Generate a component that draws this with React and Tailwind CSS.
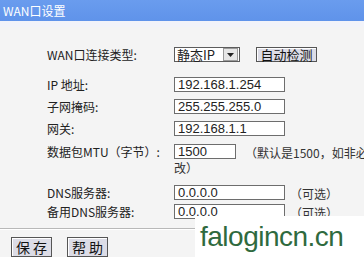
import React from 'react';

const cjk = { fontFamily: '"Noto Sans CJK SC", "Liberation Sans", sans-serif' };
const latin = { fontFamily: '"Liberation Sans", Arial, sans-serif' };

function Field({ value, width = 'w-[111px]' }) {
  return (
    <div
      className={`${width} shrink-0 h-[15px] border border-[#6d6d6d] bg-white flex items-center pl-[3px] text-[13px] leading-none text-[#222]`}
      style={latin}
    >
      {value}
    </div>
  );
}

function Row({ label, children, className = '' }) {
  return (
    <div className={`flex items-center h-[15px] ${className}`}>
      <div className="w-[127px] shrink-0 text-[12px] leading-none text-[#222] whitespace-nowrap" style={cjk}>
        {label}
      </div>
      {children}
    </div>
  );
}

function Note({ children }) {
  return (
    <span className="text-[12px] leading-none text-[#333] whitespace-nowrap" style={cjk}>
      {children}
    </span>
  );
}

const btn =
  'w-[41px] h-[20px] border border-[#555] bg-[#dcdce6] flex items-center justify-center text-[14px] leading-none tracking-[3px] pl-[3px] text-[#111] shadow-[inset_1px_1px_0_#fff]';

export default function App() {
  return (
    <div className="relative w-[364px] h-[257px] overflow-hidden bg-[#f4f4f4]">
      {/* title bar */}
      <div className="h-[21px] bg-gradient-to-b from-[#6a9cee] to-[#5f93ea] flex items-center pl-[3px]">
        <span className="text-white text-[12px] leading-none" style={cjk}>WAN口设置</span>
      </div>
      <div className="h-[6px] bg-[#f2f3f9]" />

      <div className="pl-[47px] pt-[20px]">
        <Row label="WAN口连接类型:">
          <div className="w-[66px] shrink-0 h-[15px] border border-[#5c5c5c] bg-white flex items-center">
            <span className="flex-1 pl-[2px] text-[13px] leading-none text-[#222]" style={cjk}>静态IP</span>
            <div className="w-[15px] h-[13px] mr-[1px] border border-[#9a9a9a] bg-[#e6e6e6] flex items-center justify-center">
              <svg width="7" height="4" viewBox="0 0 7 4"><path d="M0 0h7L3.5 4z" fill="#222" /></svg>
            </div>
          </div>
          <div
            className="ml-[16px] shrink-0 w-[61px] h-[15px] border border-[#555] bg-[#dcdce6] flex items-center justify-center text-[13px] leading-none text-[#111] shadow-[inset_1px_1px_0_#fff]"
            style={cjk}
          >
            自动检测
          </div>
        </Row>

        <Row label="IP 地址:" className="mt-[15px]">
          <Field value="192.168.1.254" />
        </Row>
        <Row label="子网掩码:" className="mt-[7px]">
          <Field value="255.255.255.0" />
        </Row>
        <Row label="网关:" className="mt-[7px]">
          <Field value="192.168.1.1" />
        </Row>

        <Row label="数据包MTU（字节）:" className="mt-[8px]">
          <Field value="1500" width="w-[62px]" />
          <span className="ml-[9px]"><Note>（默认是1500，如非必要，请勿修</Note></span>
        </Row>
        <div className="pl-[127px] mt-[2px] h-[14px] flex items-center">
          <Note>改）</Note>
        </div>

        <Row label="DNS服务器:" className="mt-[10px]">
          <Field value="0.0.0.0" />
          <span className="ml-[5px]"><Note>（可选）</Note></span>
        </Row>
        <Row label="备用DNS服务器:" className="mt-[4px]">
          <Field value="0.0.0.0" />
          <span className="ml-[5px]"><Note>（可选）</Note></span>
        </Row>
      </div>

      {/* separator */}
      <div className="mt-[9px] h-[1px] bg-[#b8b8b8]" />
      <div className="h-[1px] bg-white" />

      <div className="flex gap-[15px] pl-[11px] pt-[7px]">
        <div className={btn} style={cjk}>保存</div>
        <div className={btn} style={cjk}>帮助</div>
      </div>

      {/* watermark */}
      <div className="absolute left-[195px] top-[216px] w-[169px] h-[41px] bg-white flex items-center pl-[5px]">
        <span
          className="text-[28px] leading-none text-[#2f6a3e] tracking-[-0.5px]"
          style={{ fontFamily: '"Liberation Sans", cursive' }}
        >
          falogincn.cn
        </span>
      </div>
    </div>
  );
}
